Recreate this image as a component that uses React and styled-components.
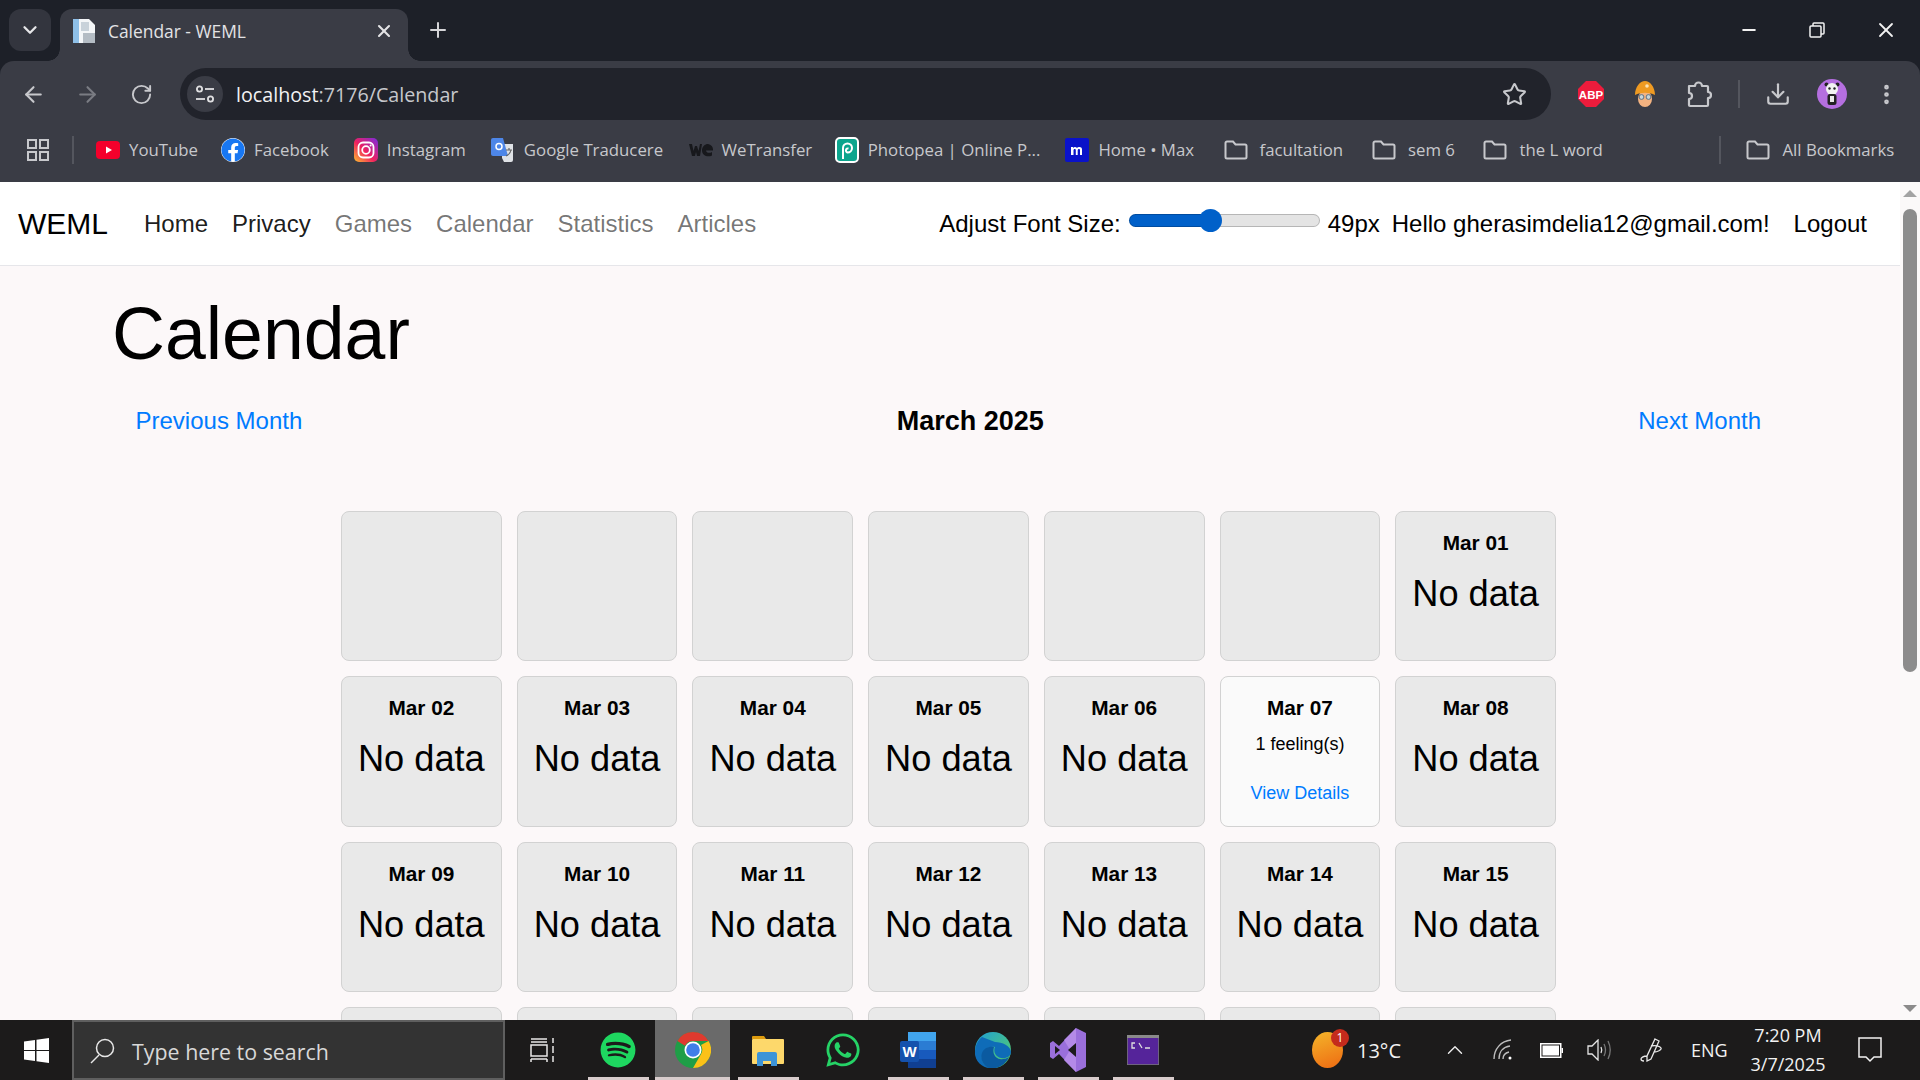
import React from "react";
import styled, { createGlobalStyle } from "styled-components";
import { FaWhatsapp, FaSpotify, FaFacebook } from "react-icons/fa";
import {
  ArrowLeft,
  ArrowRight,
  RotateCw,
  Star,
  Download,
  EllipsisVertical,
  ChevronDown,
  ChevronUp,
  X,
  Plus,
  Minus,
} from "lucide-react";

const GlobalStyle = createGlobalStyle`
  html, body {
    margin: 0;
    height: 100%;
    overflow: hidden;
  }
  body {
    font-family: "Liberation Sans", Arial, sans-serif;
  }
  * {
    box-sizing: border-box;
  }
`;

const Screen = styled.div`
  width: 1920px;
  height: 1080px;
  display: flex;
  flex-direction: column;
  overflow: hidden;
`;

/* browser chrome */
const Chrome = styled.div`
  height: 182px;
  flex: none;
  background: #1d2028;
  font-family: "Open Sans", sans-serif;
  color: #c7c8cc;
`;

const TabStrip = styled.div`
  height: 61px;
  display: flex;
  align-items: flex-start;
  padding: 9px 0 0 9px;
`;

const TabListButton = styled.div`
  width: 42px;
  height: 42px;
  border-radius: 12px;
  background: #33353e;
  display: flex;
  align-items: center;
  justify-content: center;
  color: #e6e6e8;
  margin-right: 9px;
`;

const Tab = styled.div`
  position: relative;
  width: 348px;
  height: 52px;
  background: #3a3c45;
  border-radius: 12px 12px 0 0;
  display: flex;
  align-items: center;
  padding: 0 14px 9px 12px;
  color: #e3e3e5;
  font-size: 17.4px;

  &::before,
  &::after {
    content: "";
    position: absolute;
    bottom: 0;
    width: 12px;
    height: 12px;
    background: radial-gradient(circle at 0 0, #1d2028 11.5px, #3a3c45 12px);
  }
  &::before {
    left: -12px;
  }
  &::after {
    right: -12px;
    background: radial-gradient(circle at 100% 0, #1d2028 11.5px, #3a3c45 12px);
  }
`;

const TabTitle = styled.span`
  margin-left: 12px;
  flex: 1;
`;

const NewTab = styled.div`
  margin: 9px 0 0 18px;
  color: #d5d5d8;
  display: flex;
`;

const WindowControls = styled.div`
  margin-left: auto;
  margin-top: 9px;
  display: flex;
  color: #f2f2f2;
`;

const WindowButton = styled.div`
  width: 68.5px;
  display: flex;
  justify-content: center;
  align-items: center;
  height: 24px;
`;

const Toolbar = styled.div`
  height: 61px;
  background: #3a3c45;
  border-radius: 14px 14px 0 0;
  display: flex;
  align-items: center;
  padding: 5px 0 0 6px;
`;

const ToolButton = styled.div`
  width: 54px;
  margin-left: ${(p) => p.$before || 0}px;
  display: flex;
  justify-content: center;
  align-items: center;
  color: ${(p) => (p.$dim ? "#7a7c83" : "#c7c8cc")};
`;

const Omnibox = styled.div`
  width: 1371px;
  height: 52px;
  margin-left: 12px;
  background: #21232b;
  border-radius: 26px;
  display: flex;
  align-items: center;
  padding: 0 24px 0 7px;
  font-size: 19.7px;
`;

const TuneCircle = styled.div`
  width: 36px;
  height: 36px;
  border-radius: 50%;
  background: #3a3c45;
  display: flex;
  align-items: center;
  justify-content: center;
  margin-right: 13px;
`;

const Url = styled.span`
  flex: 1;
  color: #c7c8cc;
  b {
    font-weight: 400;
    color: #f2f2f4;
  }
`;

const ToolDivider = styled.div`
  width: 2px;
  height: 28px;
  background: #54565e;
  margin: 0 11px 0 12px;
`;

const Bookmarks = styled.div`
  height: 60px;
  background: #3a3c45;
  display: flex;
  align-items: center;
  padding: 0 0 5px 27px;
  font-size: 16.8px;
  color: #c7c8cc;
`;

const BarDivider = styled.div`
  width: 2px;
  height: 28px;
  background: #54565e;
  margin: ${(p) => p.$margin};
`;

const Bookmark = styled.div`
  display: flex;
  align-items: center;
  gap: ${(p) => (p.$folder ? 12 : 9)}px;
  margin-right: ${(p) => p.$after || 25}px;
  white-space: nowrap;
`;

const IconBox = styled.div`
  width: 24px;
  height: 24px;
  flex: none;
  display: flex;
  align-items: center;
  justify-content: center;
`;

/* page */
const Viewport = styled.div`
  flex: 1;
  min-height: 0;
  display: flex;
`;

const Page = styled.div`
  flex: 1;
  min-width: 0;
  background: #fcf8f9;
  overflow: hidden;
`;

const NavBar = styled.nav`
  height: 84px;
  background: #fff;
  border-bottom: 1px solid #e6e6ea;
  display: flex;
  align-items: center;
  padding: 0 33px 0 18px;
  font-size: 24px;
  color: #000;
`;

const Brand = styled.div`
  font-size: 30px;
  margin-right: 36px;
`;

const NavLinks = styled.div`
  display: flex;
  gap: 24px;
`;

const NavLink = styled.a`
  color: ${(p) => (p.$muted ? "rgba(0, 0, 0, 0.55)" : "rgba(0, 0, 0, 0.9)")};
`;

const NavRight = styled.div`
  margin-left: auto;
  display: flex;
  align-items: center;
`;

const RangeInput = styled.input`
  appearance: none;
  width: 191px;
  height: 24px;
  margin: -7px 8px 0 8px;
  background: transparent;

  &::-webkit-slider-runnable-track {
    height: 13px;
    border-radius: 7px;
    background: linear-gradient(
      to right,
      #0060c9 ${(p) => p.$fill}%,
      #e4e4e4 ${(p) => p.$fill}%
    );
    box-shadow: inset 0 0 0 1px rgba(0, 0, 0, 0.2);
  }
  &::-webkit-slider-thumb {
    appearance: none;
    width: 23px;
    height: 23px;
    border-radius: 50%;
    background: #0060c9;
    margin-top: -5px;
  }
`;

const Greeting = styled.span`
  margin: 0 24px 0 12px;
`;

const Main = styled.main`
  padding: 24px 115px 0 112px;
`;

const Title = styled.h1`
  margin: 0 0 25px;
  font-size: 73.4px;
  font-weight: 400;
  line-height: 88px;
  color: #000;
`;

const MonthRow = styled.div`
  display: flex;
  justify-content: space-between;
  align-items: center;
  height: 36px;
  padding: 0 24px 0 23.5px;
  margin-bottom: 72px;
`;

const MonthLink = styled.a`
  color: #007bff;
  font-size: 24px;
`;

const MonthName = styled.div`
  font-size: 27px;
  font-weight: 700;
  color: #000;
`;

const Grid = styled.div`
  width: 1215px;
  margin: 0 auto;
  display: grid;
  grid-template-columns: repeat(7, 1fr);
  grid-auto-rows: 150.3px;
  gap: 15px;
`;

const Cell = styled.div`
  border: 1px solid #d2d2d2;
  border-radius: 8px;
  background: ${(p) => (p.$active ? "#fafafa" : "#e9e9e9")};
  display: flex;
  flex-direction: column;
  align-items: center;
  padding-top: 15px;
  color: #000;
`;

const CellDate = styled.div`
  font-size: 20.8px;
  font-weight: 700;
  line-height: 31px;
  margin-bottom: 8px;
`;

const NoData = styled.div`
  font-size: 36.2px;
  line-height: 54px;
  margin-top: 1px;
`;

const Feelings = styled.div`
  font-size: 18px;
  line-height: 26px;
  margin-bottom: 23px;
`;

const Details = styled.a`
  font-size: 18px;
  line-height: 26px;
  color: #007bff;
`;

const ScrollBar = styled.div`
  width: 20px;
  flex: none;
  background: #fbf9f9;
  display: flex;
  flex-direction: column;
  align-items: center;
  justify-content: space-between;
  padding: 8px 0;
`;

const ScrollArrow = styled.div`
  width: 0;
  height: 0;
  border-left: 7px solid transparent;
  border-right: 7px solid transparent;
  ${(p) =>
    p.$up ? "border-bottom: 7px solid #a3a3a3;" : "border-top: 7px solid #8b8b8b;"}
`;

const ScrollTrack = styled.div`
  flex: 1;
  width: 100%;
  padding: 12px 3px 0;
`;

const ScrollThumb = styled.div`
  height: 463px;
  background: #8c8c8c;
  border-radius: 7px;
`;

/* windows taskbar */
const Taskbar = styled.div`
  height: 60px;
  flex: none;
  background: #1c1b1b;
  display: flex;
  align-items: center;
  color: #f2f2f2;
  font-family: "Open Sans", sans-serif;
`;

const StartButton = styled.div`
  width: 72px;
  display: flex;
  justify-content: center;
`;

const SearchBox = styled.div`
  width: 433px;
  height: 60px;
  background: #333;
  border: 2px solid #5f5f5f;
  display: flex;
  align-items: center;
  padding: 2px 0 0 16px;
  gap: 17px;
  font-size: 21.4px;
  color: #d8d8d8;
`;

const TaskSlot = styled.div`
  position: relative;
  width: 75px;
  height: 60px;
  flex: none;
  display: flex;
  align-items: center;
  justify-content: center;
  background: ${(p) => (p.$active ? "#6a6a6a" : "transparent")};

  &::after {
    content: "";
    display: ${(p) => (p.$open ? "block" : "none")};
    position: absolute;
    bottom: 0;
    left: ${(p) => (p.$active ? 0 : 8)}px;
    right: ${(p) => (p.$active ? 0 : 6)}px;
    height: 3px;
    background: #d8cccc;
  }
`;

const Tray = styled.div`
  margin-left: auto;
  display: flex;
  align-items: center;
  height: 100%;
  padding-right: 18px;
`;

const Weather = styled.div`
  position: relative;
  width: 31px;
  height: 36px;
  margin-right: 14px;
`;

const WeatherBlob = styled.div`
  position: absolute;
  inset: 0;
  border-radius: 50%;
  background: linear-gradient(160deg, #f4b52a, #ee6a12);
`;

const Badge = styled.div`
  position: absolute;
  top: -3px;
  right: -6px;
  width: 18px;
  height: 18px;
  border-radius: 50%;
  background: #c42b1c;
  font-size: 12px;
  line-height: 18px;
  text-align: center;
  color: #fff;
`;

const TrayText = styled.div`
  font-size: ${(p) => p.$size || 19}px;
  width: ${(p) => p.$w}px;
  margin-left: ${(p) => p.$before || 0}px;
  margin-right: ${(p) => p.$after || 0}px;
  white-space: nowrap;
`;

const TrayIcon = styled.div`
  width: ${(p) => p.$w || 48}px;
  display: flex;
  justify-content: center;
  color: #ededed;
`;

const Clock = styled.div`
  width: 100px;
  margin-left: 11px;
  text-align: center;
  font-size: 18px;
  line-height: 29px;
`;

const Notify = styled.div`
  width: 64px;
  display: flex;
  justify-content: center;
`;

/* drawn icons */
const PageIcon = () => (
  <svg width="24" height="26" viewBox="0 0 24 26">
    <path d="M1 1h16l6 6v18H1z" fill="#f4f6f8" />
    <rect x="1" y="1" width="6" height="24" fill="#8fc0e8" />
    <rect x="9" y="4" width="8" height="9" fill="#c9d2da" />
    <rect x="11" y="15" width="12" height="10" fill="#b4bcc4" />
  </svg>
);

const TuneIcon = () => (
  <svg width="20" height="20" viewBox="0 0 20 20" fill="none" stroke="#e0e0e2" strokeWidth="1.8">
    <circle cx="4.5" cy="5" r="2.6" />
    <path d="M10 5h9" />
    <circle cx="15.5" cy="15" r="2.6" />
    <path d="M1 15h9" />
  </svg>
);

const AppsIcon = () => (
  <svg width="22" height="22" viewBox="0 0 22 22" fill="none" stroke="#c7c8cc" strokeWidth="2">
    <rect x="1" y="1" width="8" height="8" />
    <rect x="13" y="1" width="8" height="8" />
    <rect x="1" y="13" width="8" height="8" />
    <rect x="13" y="13" width="8" height="8" />
  </svg>
);

const FolderIcon = () => (
  <svg width="24" height="20" viewBox="0 0 24 20" fill="none" stroke="#c7c8cc" strokeWidth="2">
    <path d="M1.5 3a1.5 1.5 0 0 1 1.5-1.5h6l2.5 3H21a1.5 1.5 0 0 1 1.5 1.5v11a1.5 1.5 0 0 1-1.5 1.5H3A1.5 1.5 0 0 1 1.5 17z" />
  </svg>
);

const PuzzleIcon = () => (
  <svg width="26" height="28" viewBox="0 0 26 28" fill="none" stroke="#c7c8cc" strokeWidth="2.2" strokeLinejoin="round">
    <path d="M3 6h6a3.500 3.500 0 0 1 7 0h5a1 1 0 0 1 1 1v5a3 3 0 0 1 0 6v7a1 1 0 0 1-1 1H4a1 1 0 0 1-1-1v-6a3 3 0 0 0 0-6z" />
  </svg>
);

const YoutubeIcon = () => (
  <svg width="24" height="20" viewBox="0 0 24 20">
    <rect y="1" width="24" height="18" rx="4" fill="#f4002b" />
    <path d="M10 6.5l6 3.5-6 3.5z" fill="#fff" />
  </svg>
);

const InstagramIcon = () => (
  <svg width="24" height="24" viewBox="0 0 24 24">
    <defs>
      <linearGradient id="ig" x1="0" y1="1" x2="1" y2="0">
        <stop offset="0" stopColor="#fdc02f" />
        <stop offset="0.45" stopColor="#f0215f" />
        <stop offset="1" stopColor="#7a2be0" />
      </linearGradient>
    </defs>
    <rect width="24" height="24" rx="5" fill="url(#ig)" />
    <rect x="4.5" y="4.5" width="15" height="15" rx="4.5" fill="none" stroke="#fff" strokeWidth="1.8" />
    <circle cx="12" cy="12" r="3.8" fill="none" stroke="#fff" strokeWidth="1.8" />
    <circle cx="16.6" cy="7.4" r="1" fill="#fff" />
  </svg>
);

const TranslateIcon = () => (
  <svg width="24" height="24" viewBox="0 0 24 24">
    <path d="M11 6h11a2 2 0 0 1 0 0v16a2 2 0 0 1-2 2h-7l-2-4z" fill="#dfe2e6" />
    <path d="M2 0h10l5 18H2a2 2 0 0 1-2-2V2a2 2 0 0 1 2-2z" fill="#4d86e8" />
    <circle cx="8" cy="8.5" r="3" fill="none" stroke="#fff" strokeWidth="1.5" />
    <path d="M15 12h6M18 10v2M20 12c-.5 3-2.5 5-5 6" fill="none" stroke="#666" strokeWidth="1.2" />
  </svg>
);

const WeTransferIcon = () => (
  <svg width="24" height="14" viewBox="0 0 24 14">
    <path d="M0 1h3l1.5 7L6 3h2l1.5 5L11 1h2l-2 12H8L7 9l-1 4H3zM19 1a5.5 6 0 0 1 5 6.5h-7c.3 2.5 3.5 3 6 1.5v3.5c-4 2-10 .5-10-5.2C13 3.500 16 1 19 1z" fill="#17181c" />
  </svg>
);

const PhotopeaIcon = () => (
  <svg width="24" height="26" viewBox="0 0 24 26">
    <rect x="1" y="1" width="22" height="24" rx="4" fill="#0ca58d" stroke="#fff" strokeWidth="2" />
    <path d="M8 22V11a4.500 4.500 0 1 1 4.500 4.500a2 2 0 1 1 1-4" fill="none" stroke="#fff" strokeWidth="2" />
  </svg>
);

const MaxIcon = () => (
  <svg width="24" height="24" viewBox="0 0 24 24">
    <rect width="24" height="24" rx="2" fill="#0a12c9" />
    <path d="M6 17V9h2v1c1-1.400 3-1.400 4 0 1.200-1.400 5-1.600 5 1.500V17h-2v-5c0-1.500-2-1.500-2.300 0V17h-1.900v-5c0-1.500-2-1.500-2.300 0V17z" fill="#fff" />
  </svg>
);

const AbpIcon = () => (
  <svg width="26" height="26" viewBox="0 0 26 26">
    <path d="M8 0h10l8 8v10l-8 8H8l-8-8V8z" fill="#ed1c3c" />
    <text x="13" y="17.500" fontSize="11.500" fontWeight="700" textAnchor="middle" fill="#fff" fontFamily="Liberation Sans">
      ABP
    </text>
  </svg>
);

const MushroomIcon = () => (
  <svg width="22" height="26" viewBox="0 0 22 26">
    <ellipse cx="11" cy="18" rx="7" ry="8" fill="#f3b381" />
    <path d="M1 14C1 6 6 0 11 0s10 6 10 14c-6-3-14-3-20 0z" fill="#ee9a22" />
    <circle cx="13" cy="5" r="1.800" fill="#fbe3b4" />
    <circle cx="7.500" cy="16" r="2.400" fill="#c9d6da" stroke="#5b7286" strokeWidth="1" />
    <circle cx="14.500" cy="16" r="2.400" fill="#c9d6da" stroke="#5b7286" strokeWidth="1" />
  </svg>
);

const AvatarIcon = () => (
  <svg width="30" height="30" viewBox="0 0 30 30">
    <circle cx="15" cy="15" r="15" fill="#b56fe0" />
    <circle cx="9.500" cy="5.500" r="2" fill="#222" />
    <circle cx="20.500" cy="5.500" r="2" fill="#222" />
    <circle cx="15" cy="10" r="6" fill="#f2f2f2" />
    <circle cx="12.500" cy="9.500" r="1.200" fill="#222" />
    <circle cx="17.500" cy="9.500" r="1.200" fill="#222" />
    <rect x="10.500" y="15" width="9" height="11" rx="2.500" fill="#222" />
    <rect x="13" y="17" width="4" height="6" fill="#e8e8e8" />
  </svg>
);

const RestoreIcon = () => (
  <svg width="16" height="16" viewBox="0 0 16 16" fill="none" stroke="#f2f2f2" strokeWidth="1.5">
    <rect x="1" y="4" width="11" height="11" rx="1" />
    <path d="M4 4V2a1 1 0 0 1 1-1h9a1 1 0 0 1 1 1v9a1 1 0 0 1-1 1h-2" />
  </svg>
);

const WindowsLogo = () => (
  <svg width="25" height="25" viewBox="0 0 25 25" fill="#fff">
    <path d="M0 3.500l11-1.500v10H0zM12.500 1.800L25 0v12H12.500zM0 13h11v10L0 21.500zM12.500 13H25v12l-12.500-1.800z" />
  </svg>
);

const SearchGlyph = () => (
  <svg width="25" height="26" viewBox="0 0 25 26" fill="none" stroke="#e8e8e8" strokeWidth="1.5">
    <circle cx="15" cy="10" r="8.500" />
    <path d="M9 17L1 25" />
  </svg>
);

const TaskViewIcon = () => (
  <svg width="25" height="24" viewBox="0 0 25 24" fill="none" stroke="#e8e8e8" strokeWidth="1.5">
    <path d="M1 1h16M1 4h16M1 7h16v11H1zM1 21h16M1 21v3M17 21v3M23 0v5M23 8v7M23 18v6" />
  </svg>
);

const ChromeIcon = () => (
  <svg width="36" height="36" viewBox="0 0 36 36">
    <circle cx="18" cy="18" r="18" fill="#1f9e47" />
    <path d="M18 0a18 18 0 0 1 15.600 9H18a9 9 0 0 0-8 4.800L2.400 9A18 18 0 0 1 18 0z" fill="#df3a2f" />
    <path d="M33.600 9A18 18 0 0 1 18 36l7.800-13.500A9 9 0 0 0 26 13z" fill="#fbc118" />
    <circle cx="18" cy="18" r="8.500" fill="#fff" />
    <circle cx="18" cy="18" r="6.800" fill="#3f7ee8" />
  </svg>
);

const ExplorerIcon = () => (
  <svg width="32" height="32" viewBox="0 0 32 32">
    <path d="M0 3a1 1 0 0 1 1-1h11l2 3H0z" fill="#dd9b0e" />
    <rect y="5" width="32" height="25" rx="1" fill="#fdd86b" />
    <path d="M5 32V20a2 2 0 0 1 2-2h16a2 2 0 0 1 2 2v12h-6v-5h-8v5z" fill="#3d94d8" />
  </svg>
);

const WordIcon = () => (
  <svg width="36" height="36" viewBox="0 0 36 36">
    <rect x="8" y="0" width="28" height="36" rx="2" fill="#185abd" />
    <rect x="8" y="0" width="28" height="9" fill="#41a5ee" />
    <rect x="8" y="9" width="28" height="9" fill="#2b7cd3" />
    <rect x="8" y="27" width="28" height="9" fill="#103f91" />
    <rect x="0" y="9" width="19" height="21" rx="2" fill="#1552ad" />
    <text x="9.500" y="25" fontSize="15" fontWeight="700" textAnchor="middle" fill="#fff" fontFamily="Liberation Sans">
      W
    </text>
  </svg>
);

const EdgeIcon = () => (
  <svg width="36" height="36" viewBox="0 0 36 36">
    <defs>
      <linearGradient id="edgeA" x1="0" y1="0" x2="1" y2="1">
        <stop offset="0" stopColor="#1f9fd8" />
        <stop offset="1" stopColor="#5ad25f" />
      </linearGradient>
    </defs>
    <circle cx="18" cy="18" r="18" fill="url(#edgeA)" />
    <path d="M36 20c0 5-6 7-10 6-5-1-8-6-6-11-6-1-12 3-13 9-1 5 3 10 8 12-8 0-15-7-15-15C0 13 3 8 7 5l13 5c7 0 16 4 16 10z" fill="#0f6cb8" />
    <path d="M14 36c-6-3-9-9-7-15 2-5 7-7 12-6-2 6 1 11 6 12 2 .5 6 0 9-2-3 7-11 13-20 11z" fill="#0b5aa0" />
  </svg>
);

const VisualStudioIcon = () => (
  <svg width="36" height="44" viewBox="0 0 36 44">
    <path d="M26 0l10 5v34l-10 5L9 26 3 31l-3-2V15l3-2 6 5z" fill="#9a6fdb" />
    <path d="M26 0v44L14 32l6-10-6-10z" fill="#b48ae8" />
    <path d="M5 18v8l5-4z" fill="#1c1b1b" />
    <path d="M18 22l8-7v14z" fill="#1c1b1b" />
  </svg>
);

const TerminalIcon = () => (
  <svg width="32" height="30" viewBox="0 0 32 30">
    <rect width="32" height="30" fill="#55249a" stroke="#777" strokeWidth="1.500" />
    <rect x="0" y="0" width="32" height="3" fill="#8a8a8a" />
    <path d="M8 8H5v5h3M12 8l3 5M18 13h5" fill="none" stroke="#ddd" strokeWidth="1.300" />
  </svg>
);

const WifiIcon = () => (
  <svg width="20" height="22" viewBox="0 0 20 22" fill="none" stroke="#bdbdbd" strokeWidth="1.400">
    <path d="M1 20C1 10 8 2 18 1M6 20c0-7 4-12 11-13M10 20c0-4 2-6 6-7" />
    <circle cx="17" cy="19" r="1.500" fill="#fff" stroke="none" />
  </svg>
);

const BatteryIcon = () => (
  <svg width="23" height="15" viewBox="0 0 23 15">
    <rect x="0.750" y="0.750" width="20" height="13.500" fill="none" stroke="#fff" strokeWidth="1.500" />
    <rect x="2.500" y="2.500" width="16.500" height="10" fill="#fff" />
    <rect x="21.500" y="5" width="1.500" height="5" fill="#fff" />
  </svg>
);

const VolumeIcon = () => (
  <svg width="24" height="22" viewBox="0 0 24 22" fill="none" stroke="#e5e5e5" strokeWidth="1.300">
    <path d="M1 7h4l6-6v20l-6-6H1z" />
    <path d="M14 8c1 2 1 4 0 6" />
    <path d="M17 5c2 4 2 8 0 12M21 2c3 6 3 12 0 18" stroke="#777" />
  </svg>
);

const PenIcon = () => (
  <svg width="22" height="24" viewBox="0 0 22 24" fill="none" stroke="#e8e8e8" strokeWidth="1.300">
    <path d="M15 1l4 2-8 18-4 2 0-5zM11 8c4-1 9 0 10 2s-4 4-7 4M7 18c-4 0-6 2-6 3s1 2 3 2" />
  </svg>
);

const NotifyIcon = () => (
  <svg width="24" height="26" viewBox="0 0 24 26" fill="none" stroke="#f2f2f2" strokeWidth="1.500">
    <path d="M1 1h22v19h-7l-4 4-4-4H1z" />
  </svg>
);

const FacebookIcon = styled(FaFacebook)`
  background: #fff;
  border-radius: 50%;
`;

const bookmarks = [
  { label: "YouTube", icon: <YoutubeIcon />, after: 23 },
  { label: "Facebook", icon: <FacebookIcon size={24} color="#1877f2" />, after: 25 },
  { label: "Instagram", icon: <InstagramIcon />, after: 25 },
  { label: "Google Traducere", icon: <TranslateIcon />, after: 25.5 },
  { label: "WeTransfer", icon: <WeTransferIcon />, after: 22.5 },
  { label: "Photopea | Online P...", icon: <PhotopeaIcon />, after: 25 },
  { label: "Home • Max", icon: <MaxIcon />, after: 29.5 },
  { label: "facultation", folder: true, after: 29 },
  { label: "sem 6", folder: true, after: 28.5 },
  { label: "the L word", folder: true, after: 116.6 },
];

const pad = (n) => String(n).padStart(2, "0");
const days = Array.from({ length: 28 }, (_, i) => i - 5);

function DayCell({ day }) {
  if (day < 1) return <Cell />;
  if (day === 7) {
    return (
      <Cell $active>
        <CellDate>Mar {pad(day)}</CellDate>
        <Feelings>1 feeling(s)</Feelings>
        <Details>View Details</Details>
      </Cell>
    );
  }
  return (
    <Cell>
      <CellDate>Mar {pad(day)}</CellDate>
      <NoData>No data</NoData>
    </Cell>
  );
}

export default function App() {
  return (
    <Screen>
      <GlobalStyle />
      <Chrome>
        <TabStrip>
          <TabListButton>
            <ChevronDown size={22} strokeWidth={2.5} />
          </TabListButton>
          <Tab>
            <PageIcon />
            <TabTitle>Calendar - WEML</TabTitle>
            <X size={20} strokeWidth={2.5} />
          </Tab>
          <NewTab>
            <Plus size={24} strokeWidth={2} />
          </NewTab>
          <WindowControls>
            <WindowButton>
              <Minus size={20} strokeWidth={2.4} />
            </WindowButton>
            <WindowButton>
              <RestoreIcon />
            </WindowButton>
            <WindowButton>
              <X size={24} strokeWidth={1.8} />
            </WindowButton>
          </WindowControls>
        </TabStrip>
        <Toolbar>
          <ToolButton>
            <ArrowLeft size={25} />
          </ToolButton>
          <ToolButton $dim>
            <ArrowRight size={25} />
          </ToolButton>
          <ToolButton>
            <RotateCw size={23} />
          </ToolButton>
          <Omnibox>
            <TuneCircle>
              <TuneIcon />
            </TuneCircle>
            <Url>
              <b>localhost</b>:7176/Calendar
            </Url>
            <Star size={25} strokeWidth={2} />
          </Omnibox>
          <ToolButton $before={13}>
            <AbpIcon />
          </ToolButton>
          <ToolButton>
            <MushroomIcon />
          </ToolButton>
          <ToolButton>
            <PuzzleIcon />
          </ToolButton>
          <ToolDivider />
          <ToolButton>
            <Download size={26} />
          </ToolButton>
          <ToolButton>
            <AvatarIcon />
          </ToolButton>
          <ToolButton>
            <EllipsisVertical size={25} strokeWidth={2.5} />
          </ToolButton>
        </Toolbar>
        <Bookmarks>
          <AppsIcon />
          <BarDivider $margin="0 22px 0 23px" />
          {bookmarks.map((b) => (
            <Bookmark key={b.label} $folder={b.folder} $after={b.after}>
              <IconBox>{b.folder ? <FolderIcon /> : b.icon}</IconBox>
              {b.label}
            </Bookmark>
          ))}
          <BarDivider $margin="0 25px 0 0" />
          <Bookmark $folder $after={1}>
            <IconBox>
              <FolderIcon />
            </IconBox>
            All Bookmarks
          </Bookmark>
        </Bookmarks>
      </Chrome>

      <Viewport>
        <Page>
          <NavBar>
            <Brand>WEML</Brand>
            <NavLinks>
              <NavLink>Home</NavLink>
              <NavLink>Privacy</NavLink>
              <NavLink $muted>Games</NavLink>
              <NavLink $muted>Calendar</NavLink>
              <NavLink $muted>Statistics</NavLink>
              <NavLink $muted>Articles</NavLink>
            </NavLinks>
            <NavRight>
              <span>Adjust Font Size:</span>
              <RangeInput type="range" min="12" max="100" defaultValue="49" $fill={42} />
              <span>49px</span>
              <Greeting>Hello gherasimdelia12@gmail.com!</Greeting>
              <span>Logout</span>
            </NavRight>
          </NavBar>
          <Main>
            <Title>Calendar</Title>
            <MonthRow>
              <MonthLink>Previous Month</MonthLink>
              <MonthName>March 2025</MonthName>
              <MonthLink>Next Month</MonthLink>
            </MonthRow>
            <Grid>
              {days.map((d) => (
                <DayCell key={d} day={d} />
              ))}
            </Grid>
          </Main>
        </Page>
        <ScrollBar>
          <ScrollArrow $up />
          <ScrollTrack>
            <ScrollThumb />
          </ScrollTrack>
          <ScrollArrow />
        </ScrollBar>
      </Viewport>

      <Taskbar>
        <StartButton>
          <WindowsLogo />
        </StartButton>
        <SearchBox>
          <SearchGlyph />
          Type here to search
        </SearchBox>
        <TaskSlot>
          <TaskViewIcon />
        </TaskSlot>
        <TaskSlot $open>
          <FaSpotify size={36} color="#1ed760" />
        </TaskSlot>
        <TaskSlot $open $active>
          <ChromeIcon />
        </TaskSlot>
        <TaskSlot $open>
          <ExplorerIcon />
        </TaskSlot>
        <TaskSlot>
          <FaWhatsapp size={38} color="#25d366" />
        </TaskSlot>
        <TaskSlot $open>
          <WordIcon />
        </TaskSlot>
        <TaskSlot $open>
          <EdgeIcon />
        </TaskSlot>
        <TaskSlot $open>
          <VisualStudioIcon />
        </TaskSlot>
        <TaskSlot $open>
          <TerminalIcon />
        </TaskSlot>
        <Tray>
          <Weather>
            <WeatherBlob />
            <Badge>1</Badge>
          </Weather>
          <TrayText $size={20} $w={44} $after={30}>
            13°C
          </TrayText>
          <TrayIcon $w={48}>
            <ChevronUp size={26} strokeWidth={1.3} />
          </TrayIcon>
          <TrayIcon $w={48}>
            <WifiIcon />
          </TrayIcon>
          <TrayIcon $w={48}>
            <BatteryIcon />
          </TrayIcon>
          <TrayIcon $w={48}>
            <VolumeIcon />
          </TrayIcon>
          <TrayIcon $w={56}>
            <PenIcon />
          </TrayIcon>
          <TrayText $size={18} $w={36} $before={12}>
            ENG
          </TrayText>
          <Clock>
            7:20 PM
            <br />
            3/7/2025
          </Clock>
          <Notify>
            <NotifyIcon />
          </Notify>
        </Tray>
      </Taskbar>
    </Screen>
  );
}
